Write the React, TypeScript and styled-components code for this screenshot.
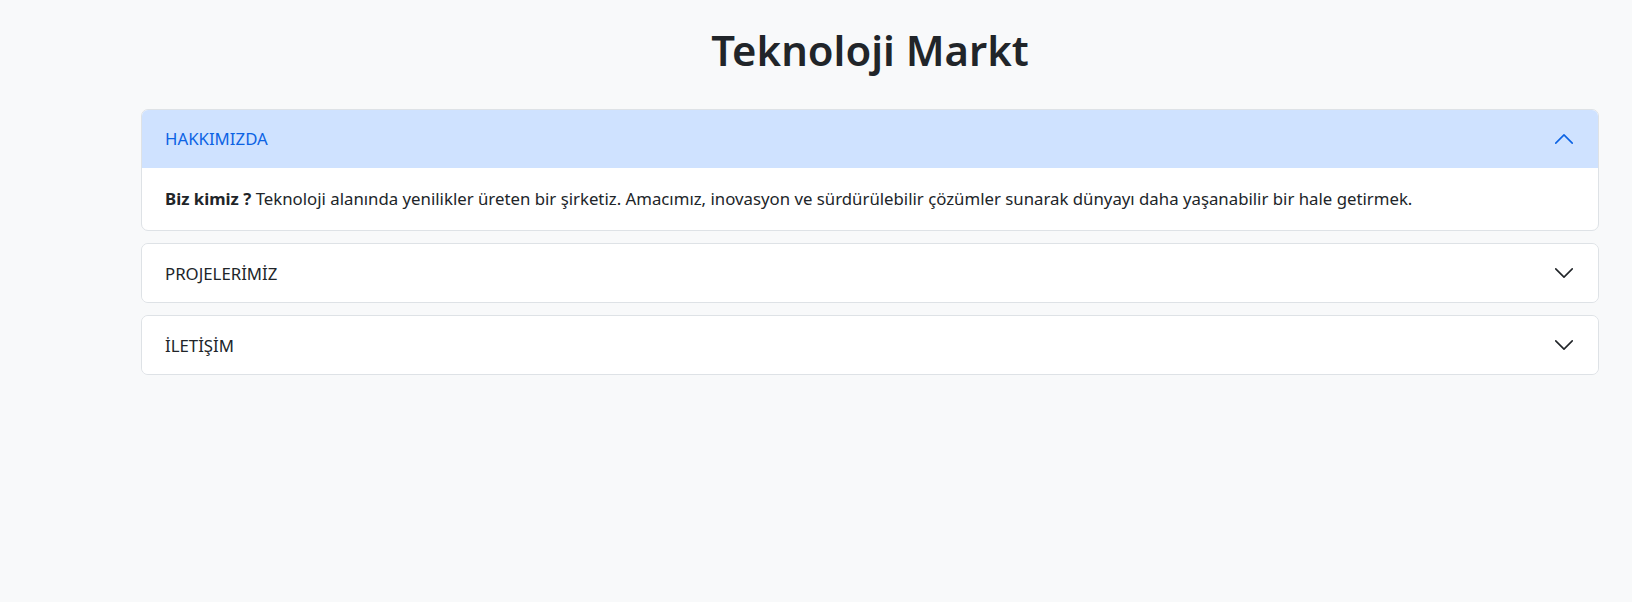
import React, { useState } from "react";
import styled, { createGlobalStyle } from "styled-components";

const GlobalStyle = createGlobalStyle`
  html, body {
    margin: 0;
    padding: 0;
    background: #f8f9fa;
  }
  body {
    font-family: "Segoe UI", "Noto Sans", "Open Sans", sans-serif;
    color: #212529;
  }
  * { box-sizing: border-box; }
`;

const Page = styled.main`
  min-height: 602px;
  padding: 24px 33px 40px 141px;
`;

const Title = styled.h1`
  margin: 0 0 32px;
  text-align: center;
  font-size: 41.8px;
  line-height: 52.8px;
  font-weight: 600;
  color: #212529;
`;

const Accordion = styled.div`
  display: flex;
  flex-direction: column;
  gap: 12px;
`;

const Item = styled.section`
  background: #fff;
  border: 1px solid #dee2e6;
  border-radius: 7px;
  overflow: hidden;
`;

const Header = styled.button<{ $active: boolean }>`
  width: 100%;
  height: 58px;
  display: flex;
  align-items: center;
  justify-content: space-between;
  padding: 0 23px;
  border: 0;
  margin: 0;
  cursor: pointer;
  font-family: inherit;
  font-size: 16.8px;
  text-align: left;
  background: ${(p) => (p.$active ? "#cfe2ff" : "#fff")};
  color: ${(p) => (p.$active ? "#0c63e4" : "#212529")};
`;

const Chevron = styled.svg<{ $active: boolean }>`
  width: 22px;
  height: 22px;
  flex-shrink: 0;
  transform: ${(p) => (p.$active ? "rotate(180deg)" : "none")};
`;

const Body = styled.div`
  padding: 18px 23px;
  font-size: 16.8px;
  line-height: 26.4px;
  color: #212529;
`;

const items = [
  {
    title: "HAKKIMIZDA",
    body: (
      <>
        <strong>Biz kimiz ?</strong> Teknoloji alanında yenilikler üreten bir şirketiz. Amacımız,
        inovasyon ve sürdürülebilir çözümler sunarak dünyayı daha yaşanabilir bir hale getirmek.
      </>
    ),
  },
  { title: "PROJELERİMİZ", body: <>Projelerimiz yakında burada olacak.</> },
  { title: "İLETİŞİM", body: <>Bize ulaşmak için iletişim sayfamızı kullanabilirsiniz.</> },
];

export default function App() {
  const [open, setOpen] = useState(0);
  return (
    <>
      <GlobalStyle />
      <Page>
        <Title>Teknoloji Markt</Title>
        <Accordion>
          {items.map((it, i) => {
            const active = open === i;
            return (
              <Item key={it.title}>
                <Header $active={active} onClick={() => setOpen(active ? -1 : i)}>
                  <span>{it.title}</span>
                  <Chevron $active={active} viewBox="0 0 16 16">
                    <path
                      d="M2 5L8 11L14 5"
                      fill="none"
                      stroke={active ? "#0c63e4" : "#212529"}
                      strokeWidth="1.15"
                      strokeLinecap="round"
                      strokeLinejoin="round"
                    />
                  </Chevron>
                </Header>
                {active && <Body>{it.body}</Body>}
              </Item>
            );
          })}
        </Accordion>
      </Page>
    </>
  );
}
